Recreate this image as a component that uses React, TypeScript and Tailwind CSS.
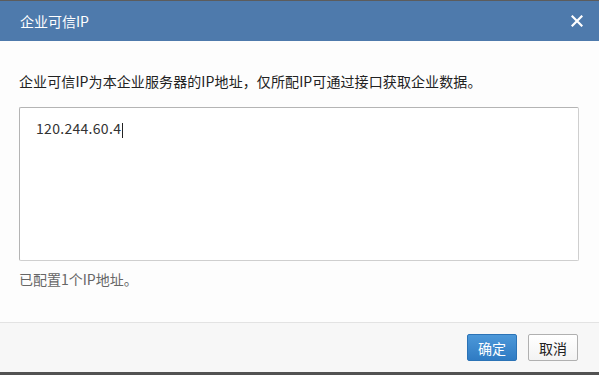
import React from 'react';

const font = { fontFamily: '"Noto Sans CJK SC", "Liberation Sans", sans-serif' };

const App: React.FC = () => {
  return (
    <div
      className="w-[599px] h-[375px] flex flex-col bg-[#fdfdfd] border-t border-[#5c5c5c] text-[14px] text-[#222]"
      style={font}
    >
      {/* header */}
      <div className="h-[40px] shrink-0 bg-[#4e7aac] flex items-center justify-between pl-[20px] pr-[16px]">
        <span className="text-white text-[14px] leading-none">企业可信IP</span>
        <svg width="12" height="12" viewBox="0 0 12 12" className="text-white">
          <path d="M1.5 1.5 L10.5 10.5 M10.5 1.5 L1.5 10.5" stroke="currentColor" strokeWidth="2.2" strokeLinecap="square" />
        </svg>
      </div>

      {/* body */}
      <div className="flex-1 pl-[19px] pr-[20px] pt-[30px]">
        <p className="leading-[20px] tracking-[0.1px]">企业可信IP为本企业服务器的IP地址，仅所配IP可通过接口获取企业数据。</p>
        <div className="mt-[16px] h-[154px] border border-[#cfcfcf] border-t-[#b4b4b4] border-l-[#b4b4b4] bg-white rounded-[2px] pl-[16px] pt-[10px]">
          <span className="leading-[20px] text-[#333] tracking-[0.3px]">120.244.60.4</span>
          <span className="inline-block w-px h-[15px] bg-[#222] align-middle ml-px" />
        </div>
        <p className="mt-[8px] leading-[20px] text-[#666]">已配置1个IP地址。</p>
      </div>

      {/* footer */}
      <div className="h-[50px] shrink-0 border-t border-[#e3e3e3] bg-[#f7f7f7] flex items-center justify-end gap-[11px] pr-[21px]">
        <button className="w-[50px] h-[27px] rounded-[2px] border border-[#2b73b6] bg-gradient-to-b from-[#4c98d9] to-[#2f7bc3] text-white text-[14px] leading-none">
          确定
        </button>
        <button className="w-[50px] h-[27px] rounded-[2px] border border-[#b0b0b0] bg-gradient-to-b from-white to-[#f3f3f3] text-[#222] text-[14px] leading-none">
          取消
        </button>
      </div>
      <div className="h-[3px] shrink-0 bg-[#525252]" />
    </div>
  );
};

export default App;
